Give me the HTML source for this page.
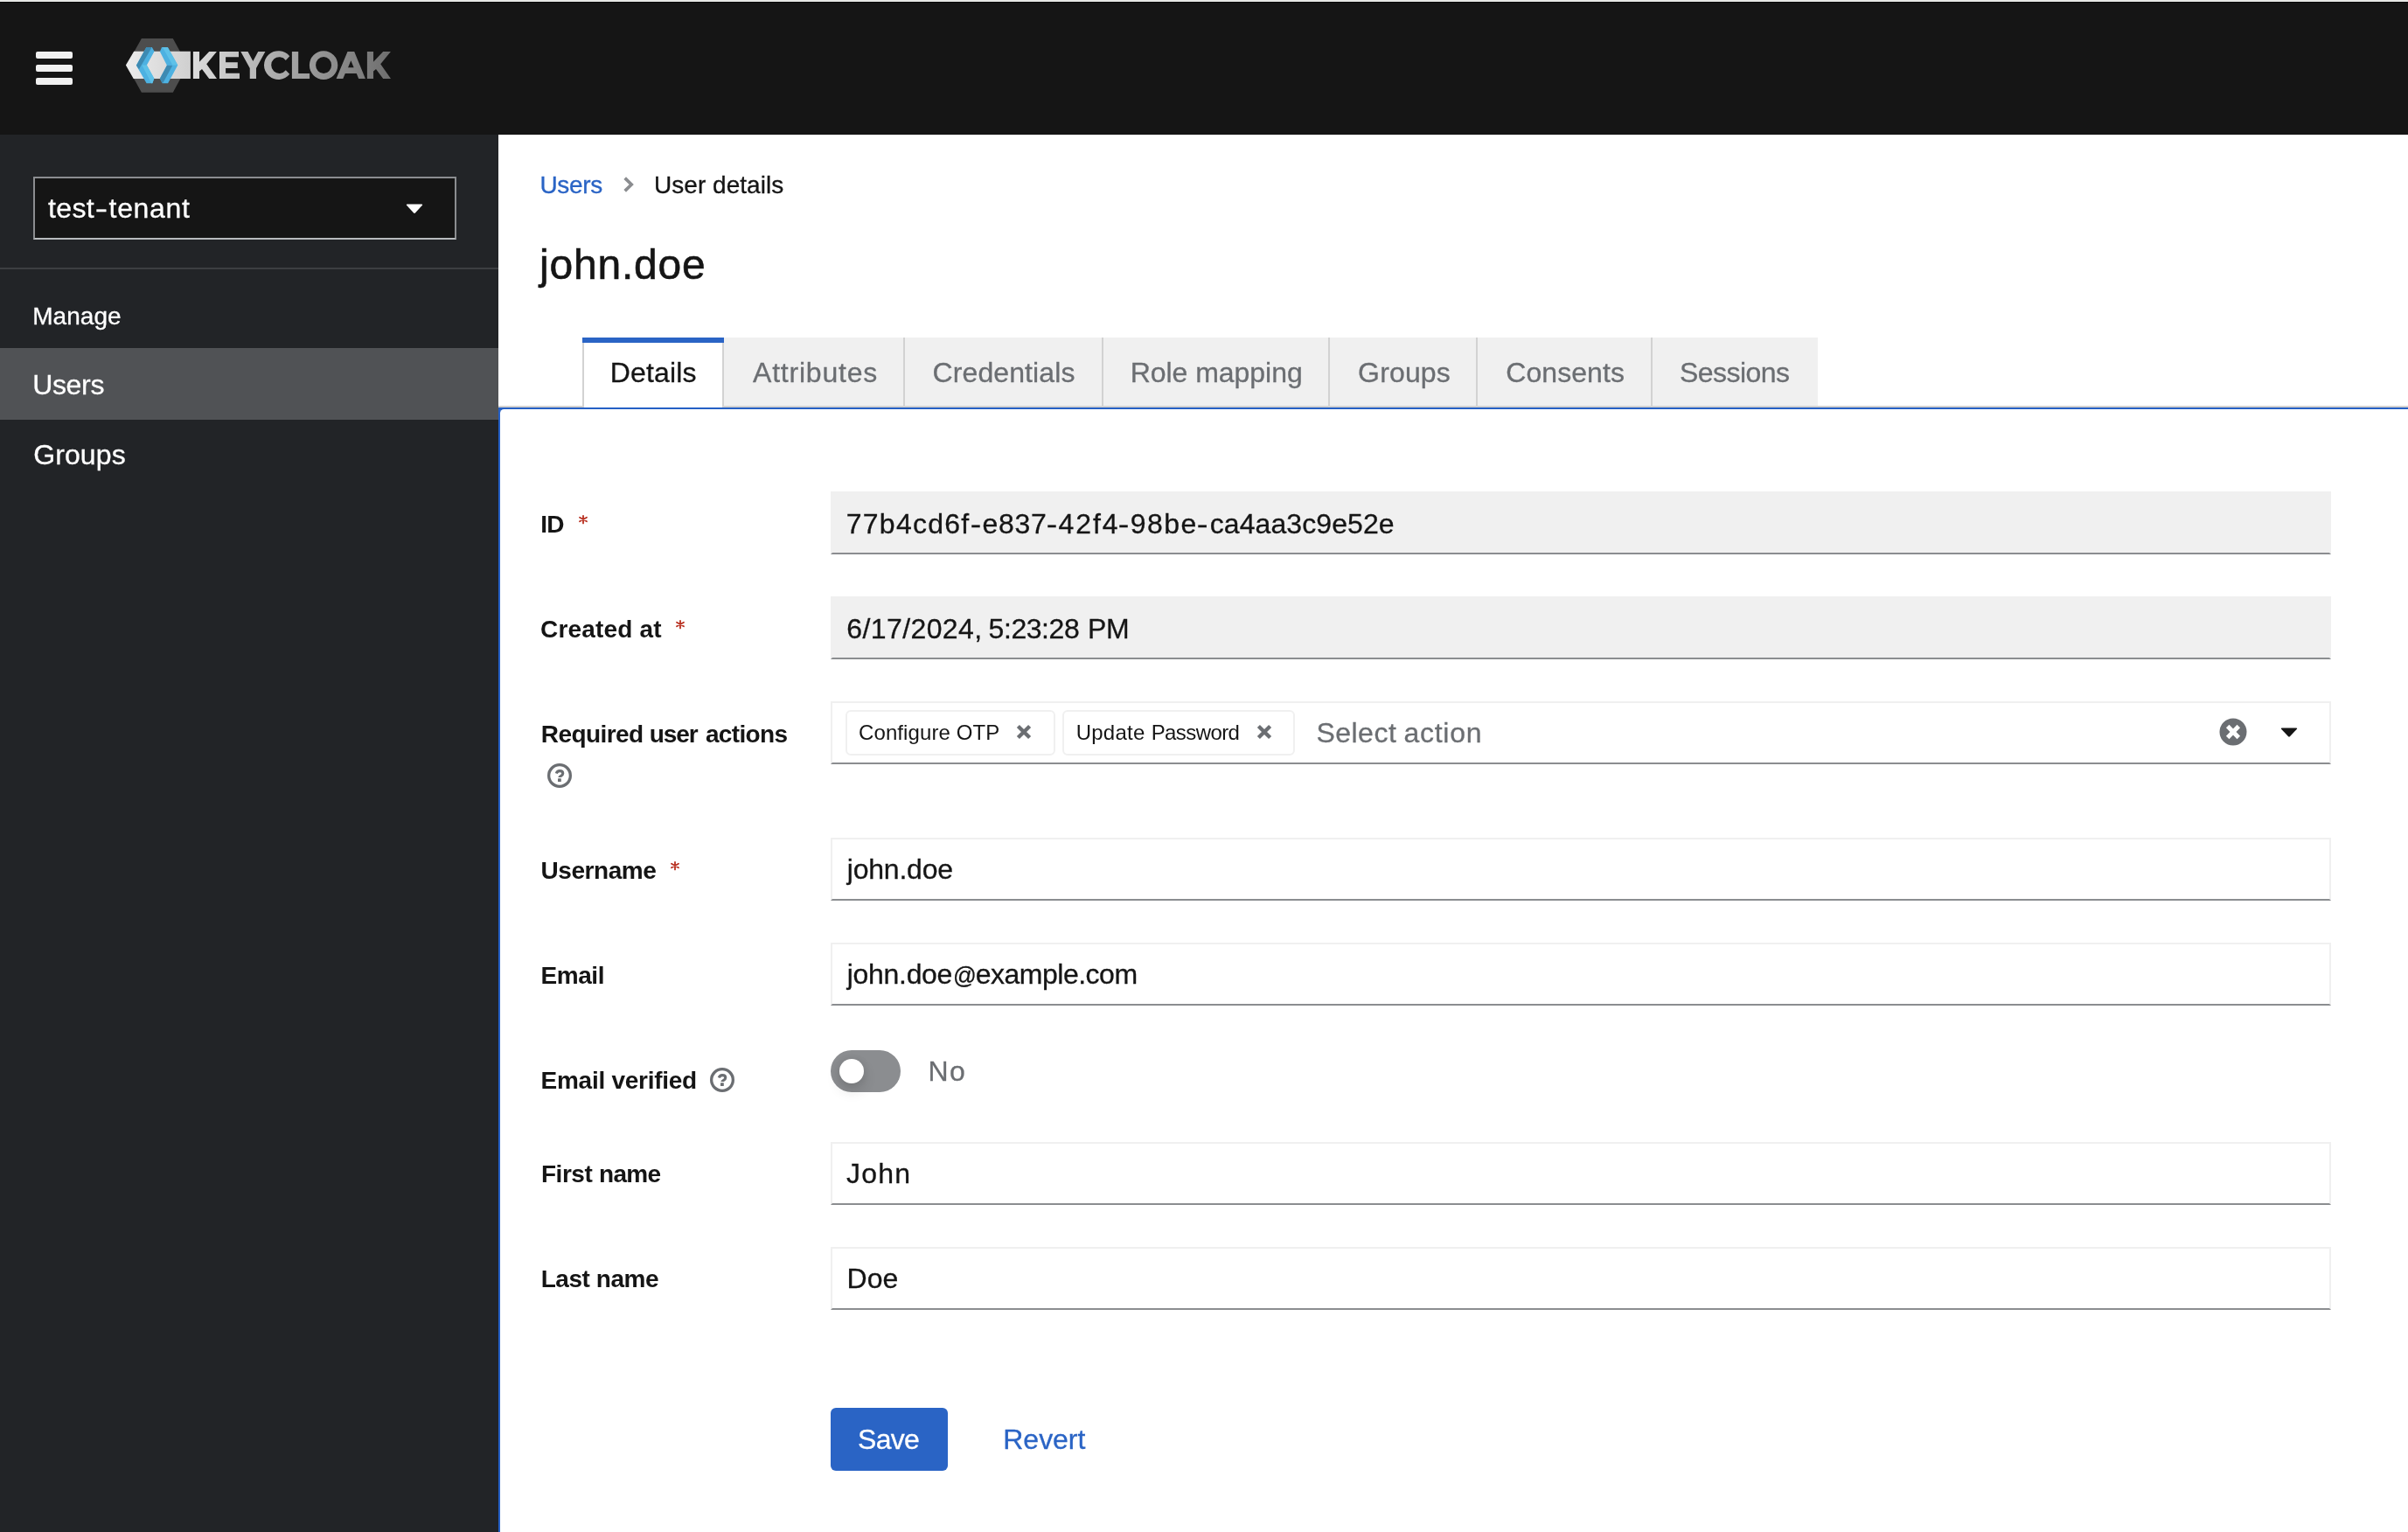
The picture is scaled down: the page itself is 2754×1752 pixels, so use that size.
<!DOCTYPE html>
<html lang="en"><head><meta charset="utf-8"><title>Keycloak Administration UI</title>
<style>
html,body{margin:0;padding:0;}
body{width:2754px;height:1752px;position:relative;overflow:hidden;background:#fff;
 font-family:"Liberation Sans",sans-serif;}
.a{position:absolute;box-sizing:border-box;}
.t{position:absolute;line-height:1;white-space:pre;font-family:"Liberation Sans",sans-serif;}
.inp{position:absolute;box-sizing:border-box;left:950px;width:1716px;height:72px;
 border:2px solid #f0f0f0;border-bottom:2px solid #8b8d90;background:#fff;}
.inp.dis{background:#f0f0f0;border-color:#f0f0f0;border-bottom-color:#8b8d90;}
.chip{position:absolute;box-sizing:border-box;top:812px;height:52px;border:2px solid #f0f0f0;border-radius:6px;background:#fff;}
.tab{position:absolute;box-sizing:border-box;top:386px;height:80px;background:#f0f0f0;
 border-right:2px solid #d2d2d2;border-bottom:2px solid #d2d2d2;}
</style></head>
<body>
<div class="a" style="left:0;top:0;width:2754px;height:1px;background:#e3e5e2"></div>
<div class="a" style="left:0;top:1px;width:2754px;height:1px;background:#eff1ee"></div>
<div class="a" style="left:0;top:2px;width:2754px;height:152px;background:#151515;border-top:1px solid #050505"></div>
<div class="a" style="left:41px;top:59.3px;width:42px;height:7.3px;border-radius:2px;background:#f0f0f0"></div>
<div class="a" style="left:41px;top:74.3px;width:42px;height:7.3px;border-radius:2px;background:#f0f0f0"></div>
<div class="a" style="left:41px;top:89.3px;width:42px;height:7.3px;border-radius:2px;background:#f0f0f0"></div>
<div class="a" style="left:0;top:154px;width:570px;height:1598px;background:#222427"></div>
<div class="a" style="left:38px;top:202px;width:484px;height:72px;background:#151515;border:2px solid #8b8d90;border-bottom-color:#b8bbbe"></div>
<svg class="a" style="left:464px;top:232.5px" width="20" height="12" viewBox="0 0 20 12"><path d="M1.6 0.4 H18.4 Q19.8 0.6 18.9 1.8 L10.9 10.6 Q10 11.4 9.1 10.6 L1.1 1.8 Q0.2 0.6 1.6 0.4Z" fill="#fff"/></svg>
<div class="a" style="left:0;top:306px;width:570px;height:2px;background:#3d3f42"></div>
<div class="a" style="left:0;top:398px;width:570px;height:82px;background:#505255"></div>
<svg class="a" style="left:700px;top:190px" width="40" height="40" viewBox="700 190 40 40"><path d="M714.7 203.6 L722.2 211 L714.7 218.4" fill="none" stroke="#8b8d90" stroke-width="3.7" stroke-linejoin="miter"/></svg>
<div class="a" style="left:570px;top:464px;width:2184px;height:2px;background:#d3d2d0"></div>
<div class="tab" style="left:828px;width:207px;"></div>
<div class="tab" style="left:1035px;width:227px;"></div>
<div class="tab" style="left:1262px;width:259px;"></div>
<div class="tab" style="left:1521px;width:169px;"></div>
<div class="tab" style="left:1690px;width:200px;"></div>
<div class="tab" style="left:1890px;width:189px;border-right:none;"></div>
<div class="a" style="left:666px;top:386px;width:162px;height:80px;background:#fff;border-left:2px solid #d2d2d2;border-right:2px solid #d2d2d2;"></div>
<div class="a" style="left:666px;top:386px;width:162px;height:6px;background:#2a64c5"></div>
<div class="a" style="left:570px;top:466px;width:2184px;height:1286px;background:#2560c5"></div>
<div class="a" style="left:572px;top:468px;width:2182px;height:1284px;background:#fff;border-radius:4.5px 0 0 0"></div>
<div class="inp dis" style="top:562px"></div>
<div class="inp dis" style="top:682px"></div>
<div class="inp" style="top:802px"></div>
<div class="inp" style="top:958px"></div>
<div class="inp" style="top:1078px"></div>
<div class="inp" style="top:1306px"></div>
<div class="inp" style="top:1426px"></div>
<div class="chip" style="left:967px;width:240px"></div>
<div class="chip" style="left:1215px;width:266px"></div>
<svg class="a" style="left:1162px;top:828px" width="18" height="18" viewBox="-9 -9 18 18"><path d="M-6.6 -6.5 L6.6 6.5 M6.6 -6.5 L-6.6 6.5" stroke="#6b6e72" stroke-width="4.4" fill="none"/></svg>
<svg class="a" style="left:1437px;top:828px" width="18" height="18" viewBox="-9 -9 18 18"><path d="M-6.6 -6.5 L6.6 6.5 M6.6 -6.5 L-6.6 6.5" stroke="#6b6e72" stroke-width="4.4" fill="none"/></svg>
<svg class="a" style="left:2538px;top:820.9px" width="32" height="32" viewBox="-16 -16 32 32"><circle cx="0" cy="0" r="15.5" fill="#6b6e72"/><path d="M-6.3 -6.4 L6.3 6.4 M6.3 -6.4 L-6.3 6.4" stroke="#fff" stroke-width="5" fill="none"/></svg>
<svg class="a" style="left:2608px;top:832.4px" width="20" height="11.7" viewBox="0 0 20 12" preserveAspectRatio="none"><path d="M1.6 0.4 H18.4 Q19.8 0.6 18.9 1.8 L10.9 10.6 Q10 11.4 9.1 10.6 L1.1 1.8 Q0.2 0.6 1.6 0.4Z" fill="#151515"/></svg>
<svg class="a" style="left:810px;top:1218.9px" width="32" height="32" viewBox="-16 -16 32 32"><circle cx="0" cy="0" r="12.35" fill="none" stroke="#6b6e72" stroke-width="3.3"/><path d="M-3.75 -2.5 C-3.1 -4.4 -1.7 -5.4 0.1 -5.4 C2.2 -5.4 3.75 -4.2 3.75 -2.5 C3.75 -1 2.8 -0.3 1.6 0.3 C0.4 0.9 -0.1 1.2 -0.1 2.1" fill="none" stroke="#6b6e72" stroke-width="3.1"/><rect x="-2" y="3.3" width="3.8" height="3.7" rx="0.5" fill="#6b6e72"/></svg>
<svg class="a" style="left:624px;top:870.9px" width="32" height="32" viewBox="-16 -16 32 32"><circle cx="0" cy="0" r="12.35" fill="none" stroke="#6b6e72" stroke-width="3.3"/><path d="M-3.75 -2.5 C-3.1 -4.4 -1.7 -5.4 0.1 -5.4 C2.2 -5.4 3.75 -4.2 3.75 -2.5 C3.75 -1 2.8 -0.3 1.6 0.3 C0.4 0.9 -0.1 1.2 -0.1 2.1" fill="none" stroke="#6b6e72" stroke-width="3.1"/><rect x="-2" y="3.3" width="3.8" height="3.7" rx="0.5" fill="#6b6e72"/></svg>
<svg class="a" style="left:660.35px;top:587.2px" width="14" height="14" viewBox="-7 -7 14 14"><path d="M0 -4.2 V4.4 M-4 -2.2 L4 2.3 M4 -2.2 L-4 2.3" stroke="#b82f1f" stroke-width="1.8" stroke-linecap="round" fill="none"/></svg>
<svg class="a" style="left:771.3px;top:707.2px" width="14" height="14" viewBox="-7 -7 14 14"><path d="M0 -4.2 V4.4 M-4 -2.2 L4 2.3 M4 -2.2 L-4 2.3" stroke="#b82f1f" stroke-width="1.8" stroke-linecap="round" fill="none"/></svg>
<svg class="a" style="left:765.4px;top:983.3px" width="14" height="14" viewBox="-7 -7 14 14"><path d="M0 -4.2 V4.4 M-4 -2.2 L4 2.3 M4 -2.2 L-4 2.3" stroke="#b82f1f" stroke-width="1.8" stroke-linecap="round" fill="none"/></svg>
<div class="a" style="left:950px;top:1201px;width:80px;height:48px;border-radius:24px;background:#8b8d90"></div>
<div class="a" style="left:959.7px;top:1210.7px;width:28.6px;height:28.6px;border-radius:50%;background:#fff;box-shadow:0 8px 16px rgba(3,3,3,0.14),0 0 8px rgba(3,3,3,0.08)"></div>
<div class="a" style="left:950px;top:1610px;width:134px;height:72px;border-radius:6px;background:#2a64c5"></div>
<svg class="a" style="left:0;top:0" width="520" height="154" viewBox="0 0 520 154">
<defs>
<linearGradient id="gt" gradientUnits="userSpaceOnUse" x1="221" y1="0" x2="447" y2="0"><stop offset="0" stop-color="#dcdcdc"/><stop offset="0.45" stop-color="#a9a9a9"/><stop offset="1" stop-color="#6e6e6e"/></linearGradient>
<linearGradient id="gb" gradientUnits="userSpaceOnUse" x1="144" y1="0" x2="219" y2="0"><stop offset="0" stop-color="#ececec"/><stop offset="1" stop-color="#cfcfcf"/></linearGradient>
</defs>
<polygon points="161.9,43.9 197.8,43.9 214.6,74.85 197.8,105.8 161.9,105.8 144.7,74.85" fill="#4d4d4d"/>
<polygon points="143.9,74.6 153.2,58.7 217.9,58.7 217.9,90 152.7,90" fill="url(#gb)"/>
<polygon points="167.4,53.9 173.8,53.9 176.5,58.7 167.9,74.6 176.3,89.8 174.3,95.3 167.6,95.3 155.9,74.7" fill="#4db1e1"/>
<polygon points="167.4,53.9 172.8,54.0 173.2,55 158.9,79.2 155.9,74.7" fill="#3d8ab2"/>
<polygon points="162.4,74.5 167.9,74.6 176.3,89.8 174.3,95.3 173.2,95.3" fill="#5ec1e8"/>
<polygon points="185,53.9 191.85,53.9 203.3,74.6 192.1,95.3 185.7,95.3 182.9,89.8 190.9,74.7 182.9,59" fill="#4db1e1"/>
<polygon points="185.9,53.9 191.85,53.9 203.3,74.6 197.4,74.6" fill="#5ec1e8"/>
<polygon points="190.9,74.7 197.2,75.1 186.6,94.4 185.2,94.4 182.9,89.8" fill="#3d8ab2"/>
<path fill="url(#gt)" fill-rule="evenodd" d="M220.90 59.00 L228.05 59.00 L228.05 70.70 L239.20 59.00 L247.90 59.00 L236.20 73.20 L248.00 90.00 L239.20 90.00 L231.00 78.90 L228.05 81.60 L228.05 90.00 L220.90 90.00Z M251 59 H273 V65.2 H258.1 V71.2 H271.8 V77.9 H258.1 V83.7 H274 V90 H251Z M275.3 59 L283.5 59 L289.35 69.9 L295.2 59 L303.4 59 L293 77.9 L293 90 L285.75 90 L285.75 77.9Z M333.9 59 H341.2 V83.9 H354.1 V90 H333.9Z M397.5 59 L405.2 59 L417.9 90 L410.2 90 L407.8 84.1 L394.8 84.1 L392.3 90 L384.6 90Z M401.35 69.2 L398.05 77.2 L404.65 77.2Z M419.90 59.00 L427.05 59.00 L427.05 70.70 L438.20 59.00 L446.90 59.00 L435.20 73.20 L447.00 90.00 L438.20 90.00 L430.00 78.90 L427.05 81.60 L427.05 90.00 L419.90 90.00Z M353.9 74.55 A16.2 16.35 0 1 0 386.3 74.55 A16.2 16.35 0 1 0 353.9 74.55Z M361.1 74.5 A9 9.6 0 1 1 379.1 74.5 A9 9.6 0 1 1 361.1 74.5Z M331.23 64.34 A16.4 16.4 0 1 0 331.23 84.76 L326.83 80.22 A9.25 9.4 0 1 1 326.83 68.88Z"/>
</svg>
<div class="a" style="left:0;top:0;width:2754px;height:1752px;will-change:transform">
<span class="t" style="left:55.00px;top:222.00px;font-size:32px;color:#ffffff;letter-spacing:0.371px;-webkit-text-stroke:0.3px;">test</span><span class="t" style="left:108.60px;top:222.00px;font-size:32px;color:#ffffff;transform-origin:1.00px 50%;transform:scaleX(1.344);-webkit-text-stroke:0.3px;">-</span><span class="t" style="left:124.60px;top:222.00px;font-size:32px;color:#ffffff;letter-spacing:0.664px;-webkit-text-stroke:0.3px;">tenant</span>
<span class="t" style="left:37.20px;top:348.00px;font-size:28px;color:#ffffff;letter-spacing:0.037px;-webkit-text-stroke:0.3px;">Manage</span>
<span class="t" style="left:37.20px;top:424.00px;font-size:32px;color:#ffffff;letter-spacing:-0.341px;-webkit-text-stroke:0.3px;">Users</span>
<span class="t" style="left:38.20px;top:504.00px;font-size:32px;color:#ffffff;letter-spacing:0.112px;-webkit-text-stroke:0.3px;">Groups</span>
<span class="t" style="left:617.40px;top:198.00px;font-size:28px;color:#2a64c5;letter-spacing:-0.304px;-webkit-text-stroke:0.3px;">Users</span>
<span class="t" style="left:748.00px;top:198.00px;font-size:28px;color:#151515;letter-spacing:0.033px;-webkit-text-stroke:0.3px;">User details</span>
<span class="t" style="left:617.00px;top:279.00px;font-size:48px;color:#151515;letter-spacing:0.803px;-webkit-text-stroke:0.6px #151515;">john.doe</span>
<span class="t" style="left:697.80px;top:410.00px;font-size:32px;color:#151515;letter-spacing:0.148px;-webkit-text-stroke:0.3px;">Details</span>
<span class="t" style="left:861.00px;top:410.00px;font-size:32px;color:#6b6e72;letter-spacing:0.792px;-webkit-text-stroke:0.3px;">Attributes</span>
<span class="t" style="left:1066.60px;top:410.00px;font-size:32px;color:#6b6e72;letter-spacing:0.094px;-webkit-text-stroke:0.3px;">Credentials</span>
<span class="t" style="left:1292.70px;top:410.00px;font-size:32px;color:#6b6e72;letter-spacing:-0.041px;-webkit-text-stroke:0.3px;">Role mapping</span>
<span class="t" style="left:1553.10px;top:410.00px;font-size:32px;color:#6b6e72;letter-spacing:0.153px;-webkit-text-stroke:0.3px;">Groups</span>
<span class="t" style="left:1722.20px;top:410.00px;font-size:32px;color:#6b6e72;letter-spacing:0.087px;-webkit-text-stroke:0.3px;">Consents</span>
<span class="t" style="left:1920.90px;top:410.00px;font-size:32px;color:#6b6e72;letter-spacing:-0.521px;-webkit-text-stroke:0.3px;">Sessions</span>
<span class="t" style="left:618.20px;top:586.00px;font-size:28px;color:#151515;letter-spacing:-0.779px;font-weight:700;">ID</span>
<span class="t" style="left:618.00px;top:706.00px;font-size:28px;color:#151515;letter-spacing:0.176px;font-weight:700;">Created at</span>
<span class="t" style="left:618.80px;top:826.00px;font-size:28px;color:#151515;letter-spacing:-0.564px;font-weight:700;">Required </span><span class="t" style="left:742.70px;top:826.00px;font-size:28px;color:#151515;letter-spacing:-1.049px;font-weight:700;">user </span><span class="t" style="left:806.90px;top:826.00px;font-size:28px;color:#151515;letter-spacing:-0.643px;font-weight:700;">actions</span>
<span class="t" style="left:618.50px;top:982.00px;font-size:28px;color:#151515;letter-spacing:-0.433px;font-weight:700;">Username</span>
<span class="t" style="left:618.60px;top:1102.00px;font-size:28px;color:#151515;letter-spacing:-0.456px;font-weight:700;">Email</span>
<span class="t" style="left:618.60px;top:1222.00px;font-size:28px;color:#151515;letter-spacing:-0.275px;font-weight:700;">Email verified</span>
<span class="t" style="left:618.90px;top:1329.00px;font-size:28px;color:#151515;letter-spacing:-0.438px;font-weight:700;">First </span><span class="t" style="left:685.00px;top:1329.00px;font-size:28px;color:#151515;letter-spacing:-0.657px;font-weight:700;">name</span>
<span class="t" style="left:618.70px;top:1449.00px;font-size:28px;color:#151515;letter-spacing:-0.453px;font-weight:700;">Last name</span>
<span class="t" style="left:967.75px;top:583.00px;font-size:32px;color:#151515;letter-spacing:1.253px;-webkit-text-stroke:0.3px;">77b4cd6f</span><span class="t" style="left:1109.80px;top:583.00px;font-size:32px;color:#151515;transform-origin:1.00px 50%;transform:scaleX(1.167);-webkit-text-stroke:0.3px;">-</span><span class="t" style="left:1123.50px;top:583.00px;font-size:32px;color:#151515;letter-spacing:0.736px;-webkit-text-stroke:0.3px;">e837</span><span class="t" style="left:1196.60px;top:583.00px;font-size:32px;color:#151515;transform-origin:1.00px 50%;transform:scaleX(1.167);-webkit-text-stroke:0.3px;">-</span><span class="t" style="left:1210.60px;top:583.00px;font-size:32px;color:#151515;letter-spacing:1.872px;-webkit-text-stroke:0.3px;">42f4</span><span class="t" style="left:1279.00px;top:583.00px;font-size:32px;color:#151515;transform-origin:1.00px 50%;transform:scaleX(1.178);-webkit-text-stroke:0.3px;">-</span><span class="t" style="left:1292.70px;top:583.00px;font-size:32px;color:#151515;letter-spacing:1.436px;-webkit-text-stroke:0.3px;">98be</span><span class="t" style="left:1369.00px;top:583.00px;font-size:32px;color:#151515;transform-origin:1.00px 50%;transform:scaleX(1.200);-webkit-text-stroke:0.3px;">-</span><span class="t" style="left:1383.70px;top:583.00px;font-size:32px;color:#151515;letter-spacing:0.084px;-webkit-text-stroke:0.3px;">ca4aa3c9e52e</span>
<span class="t" style="left:968.20px;top:703.00px;font-size:32px;color:#151515;letter-spacing:0.416px;-webkit-text-stroke:0.3px;">6/17/2024, </span><span class="t" style="left:1130.60px;top:703.00px;font-size:32px;color:#151515;letter-spacing:-0.445px;-webkit-text-stroke:0.3px;">5:23:28 </span><span class="t" style="left:1243.90px;top:703.00px;font-size:32px;color:#151515;letter-spacing:-0.344px;-webkit-text-stroke:0.3px;">PM</span>
<span class="t" style="left:968.80px;top:978.00px;font-size:32px;color:#151515;letter-spacing:-0.226px;-webkit-text-stroke:0.3px;">john.doe</span>
<span class="t" style="left:968.80px;top:1098.00px;font-size:32px;color:#151515;letter-spacing:-0.312px;-webkit-text-stroke:0.3px;">john.doe</span><span class="t" style="left:1089.50px;top:1102.00px;font-size:28px;color:#151515;transform-origin:2.00px 50%;transform:scaleX(0.942);-webkit-text-stroke:0.3px;">@</span><span class="t" style="left:1115.70px;top:1098.00px;font-size:32px;color:#151515;letter-spacing:-0.494px;-webkit-text-stroke:0.3px;">example.com</span>
<span class="t" style="left:968.10px;top:1326.00px;font-size:32px;color:#151515;letter-spacing:1.169px;-webkit-text-stroke:0.3px;">John</span>
<span class="t" style="left:968.50px;top:1446.00px;font-size:32px;color:#151515;letter-spacing:0.097px;-webkit-text-stroke:0.3px;">Doe</span>
<span class="t" style="left:982.00px;top:826.00px;font-size:24px;color:#151515;letter-spacing:0.103px;">Configure OTP</span>
<span class="t" style="left:1230.70px;top:826.00px;font-size:24px;color:#151515;letter-spacing:0.251px;">Update </span><span class="t" style="left:1316.70px;top:826.00px;font-size:24px;color:#151515;letter-spacing:-0.590px;">Password</span>
<span class="t" style="left:1505.40px;top:822.00px;font-size:32px;color:#6b6e72;letter-spacing:0.491px;-webkit-text-stroke:0.3px;">Select </span><span class="t" style="left:1605.40px;top:822.00px;font-size:32px;color:#6b6e72;letter-spacing:0.761px;-webkit-text-stroke:0.3px;">action</span>
<span class="t" style="left:1061.40px;top:1209.00px;font-size:32px;color:#6b6e72;letter-spacing:1.491px;-webkit-text-stroke:0.3px;">No</span>
<span class="t" style="left:981.00px;top:1630.00px;font-size:32px;color:#ffffff;letter-spacing:-0.714px;-webkit-text-stroke:0.3px;">Save</span>
<span class="t" style="left:1147.30px;top:1630.00px;font-size:32px;color:#2a64c5;letter-spacing:-0.032px;-webkit-text-stroke:0.3px;">Revert</span>
</div>
</body></html>
